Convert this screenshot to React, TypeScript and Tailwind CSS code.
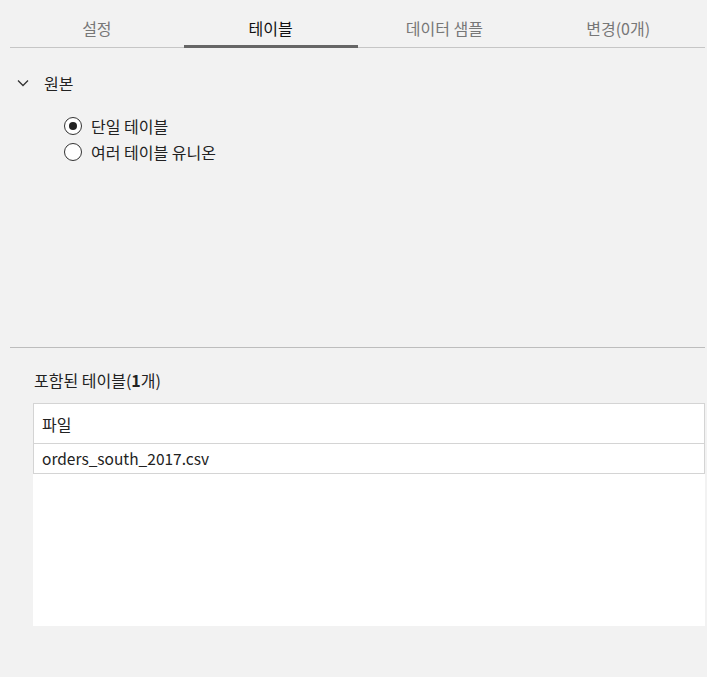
import React from "react";

const tabs = ["설정", "테이블", "데이터 샘플", "변경(0개)"];

function Radio({ checked, label }: { checked?: boolean; label: string }) {
  return (
    <div className="flex items-center h-[26px]">
      <span className="w-[18px] h-[18px] rounded-full border-[1.5px] border-[#333] bg-white flex items-center justify-center">
        {checked && <span className="w-[8px] h-[8px] rounded-full bg-[#222]" />}
      </span>
      <span className="ml-[9px] text-[16px] text-[#222] leading-[20px]">{label}</span>
    </div>
  );
}

export default function App() {
  return (
    <div
      className="w-[707px] h-[677px] bg-[#f2f2f2] overflow-hidden"
      style={{ fontFamily: '"Noto Sans CJK KR", "Noto Sans", sans-serif' }}
    >
      <div className="ml-[10px] mr-[2px] flex border-b border-[#c6c6c6]">
        {tabs.map((t, i) => (
          <div
            key={t}
            className={
              "flex-1 h-[48px] -mb-px text-center pt-[18px] leading-[20px] text-[16px] " +
              (i === 1 ? "border-b-[3px] border-[#666] text-[#111]" : "text-[#777]")
            }
          >
            {t}
          </div>
        ))}
      </div>

      <div className="h-[300px] border-b border-[#bdbdbd] ml-[10px] mr-[2px] pt-[25px]">
        <div className="flex items-center h-[20px]">
          <svg width="12" height="8" viewBox="0 0 12 8" className="ml-[7px]">
            <path d="M1 1.5 L6 6.5 L11 1.5" fill="none" stroke="#333" strokeWidth="1.3" />
          </svg>
          <span className="ml-[15px] text-[16px] text-[#222] leading-[20px]">원본</span>
        </div>
        <div className="ml-[54px] mt-[20px] flex flex-col">
          <Radio checked label="단일 테이블" />
          <Radio label="여러 테이블 유니온" />
        </div>
      </div>

      <div className="ml-[33px] mr-[2px] pt-[22px]">
        <div className="h-[20px] leading-[20px] text-[16px] text-[#222] ml-[1px]">
          포함된 테이블(<span className="font-bold">1</span>개)
        </div>
        <div className="mt-[13px] bg-white h-[223px]">
          <div className="border border-[#d4d4d4] h-[41px] flex items-center pl-[8px] text-[16px] text-[#222]">
            파일
          </div>
          <div className="border border-t-0 border-[#d4d4d4] h-[30px] flex items-center pl-[8px] text-[15.5px] text-[#222]">
            orders_south_2017.csv
          </div>
        </div>
      </div>
    </div>
  );
}
